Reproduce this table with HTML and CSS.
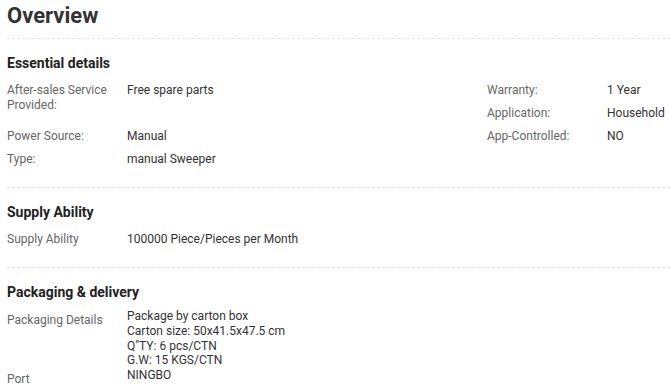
FILE: index.html
```html
<!DOCTYPE html>
<html lang="en">
<head>
<meta charset="utf-8">
<title>Overview</title>
<link rel="stylesheet" href="styles.css">
</head>
<body>
<div class="overview">
  <h1 class="title">Overview</h1>

  <section class="block block-essential">
    <h2 class="block-title">Essential details</h2>
    <div class="entry-grid">
      <div class="entry entry-tall">
        <div class="entry-label">After-sales Service<br>Provided:</div>
        <div class="entry-value">Free spare parts</div>
      </div>
      <div class="entry">
        <div class="entry-label">Warranty:</div>
        <div class="entry-value">1 Year</div>
      </div>
      <div class="entry">
        <div class="entry-label">Application:</div>
        <div class="entry-value">Household</div>
      </div>
      <div class="entry">
        <div class="entry-label">Power Source:</div>
        <div class="entry-value">Manual</div>
      </div>
      <div class="entry">
        <div class="entry-label">App-Controlled:</div>
        <div class="entry-value">NO</div>
      </div>
      <div class="entry">
        <div class="entry-label">Type:</div>
        <div class="entry-value">manual Sweeper</div>
      </div>
    </div>
  </section>

  <section class="block block-supply">
    <h2 class="block-title">Supply Ability</h2>
    <div class="entry-list entry-list-supply">
      <div class="entry">
        <div class="entry-label">Supply Ability</div>
        <div class="entry-value">100000 Piece/Pieces per Month</div>
      </div>
    </div>
  </section>

  <section class="block block-packaging">
    <h2 class="block-title">Packaging &amp; delivery</h2>
    <div class="entry-list entry-list-packaging">
      <div class="entry entry-multi">
        <div class="entry-label">Packaging Details</div>
        <div class="entry-value">Package by carton box<br>Carton size: 50x41.5x47.5 cm<br>Q"TY: 6 pcs/CTN<br>G.W: 15 KGS/CTN</div>
      </div>
      <div class="entry entry-multi">
        <div class="entry-label">Port</div>
        <div class="entry-value">NINGBO</div>
      </div>
    </div>
  </section>
</div>
</body>
</html>
```

FILE: styles.css
```css
html, body {
  margin: 0;
  padding: 0;
  background: #ffffff;
}

body {
  font-family: Roboto, "Liberation Sans", Arial, sans-serif;
  font-size: 12px;
  color: #333333;
  overflow: hidden;
}

.overview {
  padding-left: 7px;
}

.title {
  margin: 0;
  padding-top: 1px;
  font-size: 22px;
  line-height: 30px;
  font-weight: 700;
  color: #333333;
  margin-bottom: 7px;
}

.block {
  border-top: 1px dashed #e3e3e3;
  padding-top: 14px;
}

.block-title {
  margin: 0;
  font-size: 14px;
  line-height: 21px;
  font-weight: 700;
  color: #222222;
}

.entry-grid {
  display: grid;
  grid-template-columns: 480px 1fr;
  grid-auto-rows: 23px;
  margin-top: 5px;
  margin-bottom: 16px;
}

.entry {
  display: flex;
  padding-top: 4px;
  line-height: 14.75px;
}

.entry-tall {
  grid-row: span 2;
}

.entry-label {
  flex: 0 0 120px;
  color: #666666;
}

.entry-value {
  flex: 1 1 auto;
  color: #333333;
}

.entry-list-supply {
  margin-top: 5px;
  margin-bottom: 16px;
}

.entry-list-supply .entry {
  height: 19px;
}

.entry-list-packaging {
  margin-top: 6px;
}

.entry-multi {
  padding-top: 0;
}

.entry-multi .entry-label {
  line-height: 23px;
}
```
